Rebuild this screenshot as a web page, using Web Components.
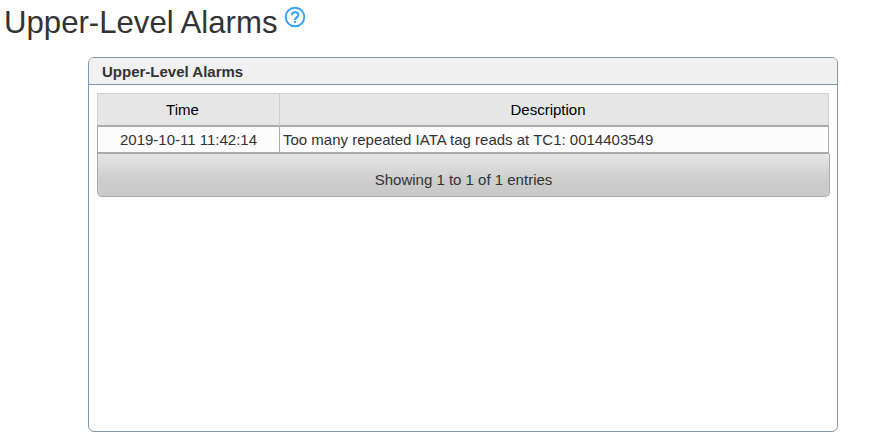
<!DOCTYPE html>
<html lang="en"><head><meta charset="utf-8"><title>Upper-Level Alarms</title>
<style>body{margin:0;background:#fff;color:#333;font-family:"Liberation Sans",Arial,sans-serif}</style></head>
<body>
<page-title>Upper-Level Alarms</page-title>
<alarm-panel><span slot="heading">Upper-Level Alarms</span>
<alarm-table><span slot="time">2019-10-11 11:42:14</span><span slot="description">Too many repeated IATA tag reads at TC1: 0014403549</span><span slot="info">Showing 1 to 1 of 1 entries</span></alarm-table>
</alarm-panel>
<script>
const define=(name,html)=>customElements.define(name,class extends HTMLElement{
  constructor(){super();this.attachShadow({mode:'open'}).innerHTML=html;}
});
define('help-icon',`<style>:host{display:block;width:22px;height:22px}svg{display:block}</style>
<svg width="22" height="22" viewBox="0 0 22 22" fill="none" stroke="#2ea3f2" stroke-width="1.9"><circle cx="11" cy="11" r="9.300"/><path d="M7.700 9.200C7.700 7.400 9.100 6.300 11 6.300S14.400 7.400 14.400 9.100C14.400 11.300 11.100 11.500 11.100 13.900" stroke-width="2"/><path d="M11.100 14.900v1.900" stroke-width="2.200"/></svg>`);
define('page-title',`<style>:host{display:flex;align-items:flex-start;gap:7px;height:57px;padding-left:4px;box-sizing:border-box}
h1{margin:5px 0 0;font-size:31.150px;line-height:36px;font-weight:400;white-space:nowrap}help-icon{margin-top:6px}</style>
<h1><slot></slot></h1><help-icon></help-icon>`);
define('alarm-panel',`<style>:host{display:block;box-sizing:border-box;width:750px;height:375px;margin-left:88px;border:1px solid #8097a8;border-radius:6px;overflow:hidden}
header{height:26px;background:#f0f0f0;border-bottom:1px solid #8097a8;padding-left:13px;font-size:15px;line-height:28px;font-weight:700}
main{padding:8px}</style><header><slot name="heading"></slot></header><main><slot></slot></main>`);
define('alarm-table',`<style>:host{display:block;width:733px;font-size:15px}
table{width:732px;border-collapse:separate;border-spacing:0;table-layout:fixed}
th,td{box-sizing:border-box;padding:0;white-space:nowrap}
th{height:34px;background:#e6e6e6;border:1px solid #d0d0d0;border-right:0;border-bottom:2px solid #aaa;font-weight:400;color:#000}
td{height:27px;background:#fcfcfc;border-left:1px solid #aaa;border-bottom:2px solid #aaa;line-height:25px}
th:last-child{border-right:1px solid #d0d0d0}td:last-child{border-right:1px solid #aaa;padding-left:3px}
th:first-child{width:182px;padding-right:12px}td:first-child{text-align:center}th:last-child{padding-right:12px}
footer{box-sizing:border-box;width:733px;height:43px;border:1px solid #aaa;border-top:0;border-radius:0 0 5px 5px;background:linear-gradient(#e6e6e6,#ccc 65%,#cacaca);text-align:center;line-height:52px}</style>
<table><thead><tr><th>Time</th><th>Description</th></tr></thead><tbody><tr><td><slot name="time"></slot></td><td><slot name="description"></slot></td></tr></tbody></table><footer><slot name="info"></slot></footer>`);
</script></body></html>
